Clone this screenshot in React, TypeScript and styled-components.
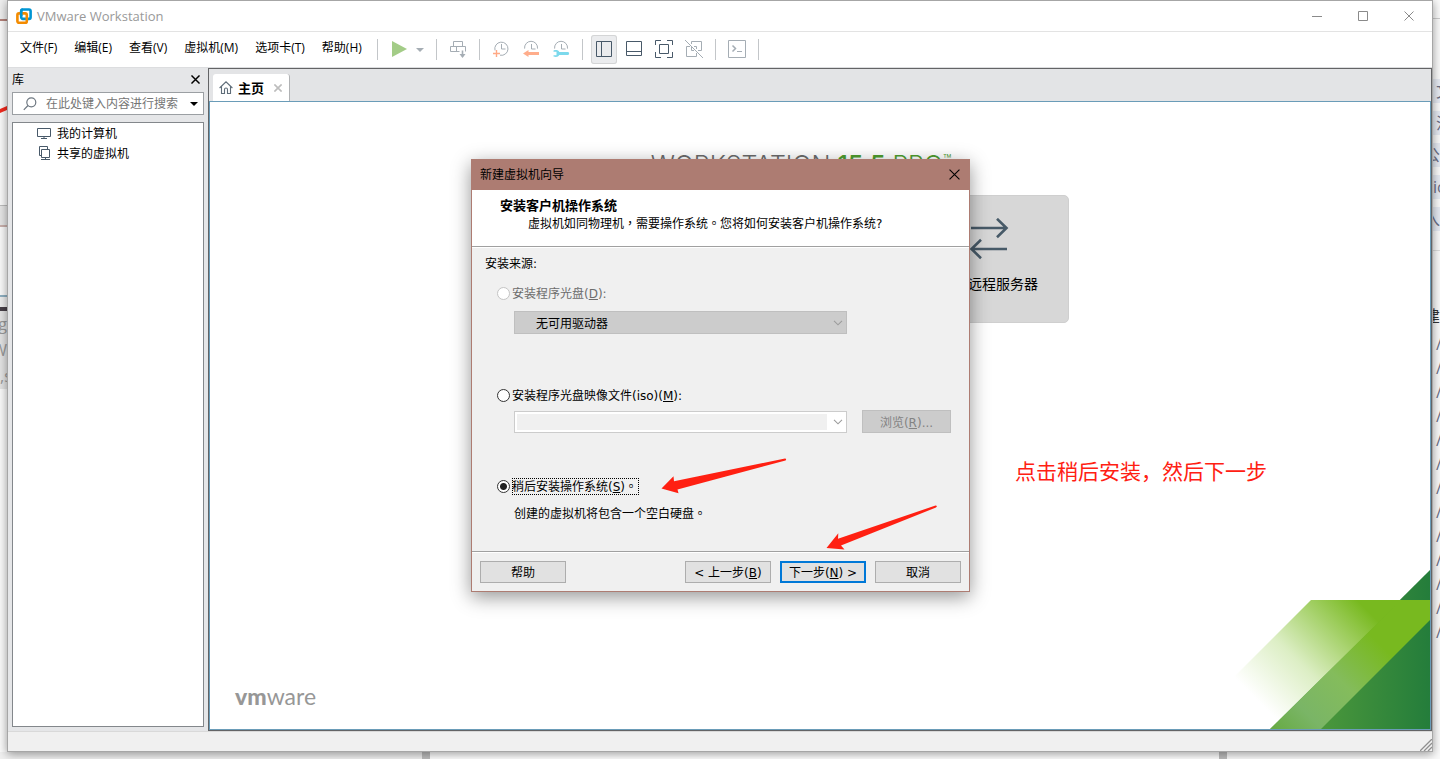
import React from "react";
import styled, { createGlobalStyle, css } from "styled-components";

const ui = `"Open Sans", "Noto Sans CJK SC", sans-serif`;
const wizardFont = `"DejaVu Sans", "Noto Sans CJK TC", sans-serif`;
const slate = "#485969";
const muted = "#a5adb4";

const GlobalStyle = createGlobalStyle`
  *, *::before, *::after { box-sizing: border-box; }
  body { margin: 0; background: #f6f6f6; font-family: ${ui}; font-size: 12px; color: #000; }
  button, input, select { font: inherit; color: inherit; margin: 0; }
  svg { display: block; flex: none; }
`;

/* ---------- desktop behind the window ---------- */

const Desktop = styled.div`
  display: grid;
  grid-template-columns: 7px minmax(0, 1fr) 7px;
  grid-template-rows: minmax(752px, 1fr) 7px;
  min-height: 100vh;
`;

const Gutter = styled.div`
  display: flex;
  flex-direction: column;
  overflow: hidden;
  background: #fafafa;
`;

const Strip = styled.div<{ $h: number; $bg?: string }>`
  flex: none;
  height: ${(p) => p.$h}px;
  background: ${(p) => p.$bg || "transparent"};
`;

const Sliver = styled.div<{ $h: number; $bg?: string; $color?: string; $end?: boolean; $indent?: number }>`
  flex: none;
  display: flex;
  align-items: center;
  justify-content: ${(p) => (p.$end ? "flex-end" : "flex-start")};
  height: ${(p) => p.$h}px;
  padding-left: ${(p) => p.$indent || 0}px;
  font-size: 16px;
  line-height: 24px;
  white-space: nowrap;
  color: ${(p) => p.$color || "#6b6f86"};
  background: ${(p) => p.$bg || "transparent"};
`;

const Tags = styled.div`
  display: flex;
  flex-direction: column;
  gap: 8px;
  padding: 60px 0 19px;
`;

const BottomEdge = styled.div`
  grid-column: 1 / -1;
  display: grid;
  grid-template-columns: 422px 8px minmax(0, 1fr) 8px 213px;
  background: #fbfbfb;
`;

const BottomPiece = styled.div<{ $bg: string }>`
  background: ${(p) => p.$bg};
`;

/* ---------- application window ---------- */

const Frame = styled.main`
  position: relative;
  z-index: 1;
  display: flex;
  flex-direction: column;
  background: #fff;
  border: 1px solid #a6a6a6;
  box-shadow: 0 2px 9px rgba(0, 0, 0, 0.4);
`;

const TitleBar = styled.header`
  display: flex;
  align-items: center;
  height: 31px;
  padding-left: 8px;
  gap: 5px;
  border-bottom: 1px solid #e3e3e3;
  color: #999;
`;

const AppTitle = styled.span`
  flex: 1;
  padding-bottom: 1px;
  font-size: 13px;
  line-height: 18px;
`;

const Controls = styled.div`
  display: flex;
`;

const ControlButton = styled.button`
  display: grid;
  place-items: center;
  width: 46px;
  height: 30px;
  padding: 0;
  border: 0;
  background: none;
`;

const MenuRow = styled.div`
  display: flex;
  align-items: center;
  height: 36px;
  border-bottom: 1px solid #dcdddf;
`;

const Menu = styled.nav`
  display: flex;
  flex: 0 0 369px;
  gap: 17px;
  padding-left: 12px;
`;

const MenuButton = styled.button`
  padding: 0 0 3px;
  border: 0;
  background: none;
  line-height: 18px;
  white-space: nowrap;
`;

const ToolGroup = styled.div`
  display: flex;
  gap: 4px;
  padding: 0 8px;
  align-items: center;
`;

const Divider = styled.span`
  width: 1px;
  height: 21px;
  background: #c3c6c9;
`;

const ToolButton = styled.button<{ $active?: boolean; $narrow?: boolean }>`
  display: grid;
  align-content: center;
  justify-content: ${(p) => (p.$narrow ? "start" : "center")};
  width: ${(p) => (p.$narrow ? 12 : 26)}px;
  height: 29px;
  padding: 0;
  border: 0;
  border-radius: 3px;
  background: none;
  ${(p) =>
    p.$active &&
    css`
      background: #ebecee;
      box-shadow: inset 0 0 0 1px #d4d5d6;
    `}
`;

const Body = styled.div`
  display: flex;
  flex: 1;
  min-height: 0;
`;

const StatusBar = styled.footer`
  display: flex;
  align-items: flex-end;
  justify-content: flex-end;
  height: 20px;
  background: #f0f0f0;
  border-top: 1px solid #d9d9d9;
`;

/* ---------- library sidebar ---------- */

const Library = styled.aside`
  display: flex;
  flex-direction: column;
  flex: none;
  width: 200px;
  padding: 0 4px 4px;
  background: #e5e6e8;
`;

const LibraryHead = styled.div`
  display: flex;
  align-items: center;
  justify-content: space-between;
  height: 24px;
  padding: 0 4px 1px 0;
`;

const LibraryTitle = styled.h2`
  margin: 0;
  font-size: 12px;
  font-weight: 400;
  line-height: 22px;
`;

const BareButton = styled.button`
  display: grid;
  place-items: center;
  padding: 0;
  border: 0;
  background: none;
`;

const SearchBox = styled.div`
  display: flex;
  align-items: center;
  height: 23px;
  padding: 0 5px 0 10px;
  gap: 9px;
  background: #fff;
  border: 1px solid #9b9fa3;
`;

const SearchInput = styled.input`
  flex: 1;
  min-width: 0;
  padding: 0;
  border: 0;
  outline: 0;
  background: none;
  line-height: 20px;
  &::placeholder { color: #757575; opacity: 1; }
`;

const Tree = styled.ul`
  flex: 1;
  margin: 7px 0 0;
  padding: 0;
  list-style: none;
  background: #fff;
  border: 1px solid #83878b;
`;

const TreeItem = styled.li`
  display: flex;
  align-items: center;
  gap: 6px;
  height: 20px;
  padding-left: 24px;
`;

/* ---------- home tab ---------- */

const Workspace = styled.section`
  display: flex;
  flex-direction: column;
  flex: 1;
  min-width: 0;
  border: 1px solid #636466;
  background: #e3e4e6;
`;

const TabBar = styled.div`
  display: flex;
  align-items: flex-end;
  height: 32px;
  padding-left: 4px;
`;

const Tab = styled.div`
  display: flex;
  align-items: center;
  width: 77px;
  height: 27px;
  padding: 0 7px 0 6px;
  gap: 5px;
  background: #fff;
  border-right: 1px solid #b0b2b4;
  border-radius: 3px 3px 0 0;
`;

const TabName = styled.button`
  flex: 1;
  padding: 0;
  border: 0;
  background: none;
  font-size: 13px;
  font-weight: 700;
  line-height: 20px;
  text-align: left;
  white-space: nowrap;
`;

const Home = styled.div`
  position: relative;
  display: flex;
  flex-direction: column;
  justify-content: space-between;
  flex: 1;
  background: #fff;
  border: 1px solid #6a9cb8;
`;

const Hero = styled.div`
  display: flex;
  flex-direction: column;
  align-self: center;
  width: 536px;
  margin-right: 38px;
  padding-top: 46px;
`;

const Product = styled.h1`
  margin: 0 0 13px;
  font-family: Inter, sans-serif;
  font-size: 25px;
  font-weight: 300;
  line-height: 34px;
  text-align: center;
  white-space: nowrap;
  color: #6c6c6c;
`;

const Edition = styled.span`
  color: #4f9e2f;
`;

const Version = styled.b`
  font-weight: 500;
`;

const Trade = styled.sup`
  font-size: 14px;
  line-height: 0;
`;

const ServerCard = styled.button`
  display: flex;
  flex-direction: column;
  align-items: center;
  align-self: flex-end;
  gap: 13px;
  width: 160px;
  height: 128px;
  padding: 22px 0 0;
  border: 1px solid #cfcfcf;
  border-radius: 5px;
  background: #d7d7d7;
  font-size: 14px;
  line-height: 22px;
`;

const HomeFoot = styled.div`
  display: flex;
  align-items: flex-end;
  justify-content: space-between;
  padding-left: 25px;
`;

const Brand = styled.span`
  padding-bottom: 17px;
  font-family: Lato, sans-serif;
  font-size: 23px;
  line-height: 32px;
  color: #979797;
`;

const BrandBold = styled.b`
  font-weight: 900;
`;

const Note = styled.p`
  position: absolute;
  top: 354px;
  right: 163px;
  margin: 0;
  font-size: 21px;
  line-height: 30px;
  color: #ff2012;
`;

/* ---------- wizard ---------- */

const Overlay = styled.div`
  position: absolute;
  inset: 0;
  z-index: 2;
  display: flex;
  justify-content: center;
  align-items: flex-start;
  padding: 158px 0 0 1px;
  pointer-events: none;
`;

const Dialog = styled.section`
  position: relative;
  width: 499px;
  border: 1px solid #ad7c72;
  background: #f0f0f0;
  font-family: ${wizardFont};
  line-height: 18px;
  box-shadow: 0 5px 18px rgba(0, 0, 0, 0.42);
  pointer-events: auto;
`;

const DialogBar = styled.header`
  display: flex;
  align-items: center;
  justify-content: space-between;
  height: 30px;
  padding: 0 9px 1px 8px;
  background: #ad7c72;
`;

const DialogIntro = styled.div`
  height: 57px;
  padding: 7px 0 0 28px;
  background: #fff;
  border-bottom: 1px solid #a0a0a0;
`;

const IntroTitle = styled.h2`
  margin: 0;
  font-size: 13px;
  line-height: 18px;
`;

const IntroText = styled.p`
  margin: 0 0 0 28px;
`;

const Form = styled.form`
  margin: 0;
`;

const Sources = styled.fieldset`
  min-width: 0;
  height: 305px;
  margin: 0;
  padding: 7px 0 0 13px;
  border: 0;
  border-top: 1px solid #fff;
`;

const SourcesLabel = styled.legend`
  float: left;
  width: 100%;
  padding: 0;
`;

const Option = styled.div<{ $h: number; $first?: boolean }>`
  clear: both;
  height: ${(p) => p.$h}px;
  margin-left: 12px;
  padding-top: ${(p) => (p.$first ? 12 : 0)}px;
`;

const RadioRow = styled.div<{ $dim?: boolean }>`
  display: flex;
  align-items: center;
  gap: 2px;
  height: 17px;
  color: ${(p) => (p.$dim ? "#6d6d6d" : "#000")};
`;

const Radio = styled.input`
  appearance: none;
  width: 13px;
  height: 13px;
  border: 1px solid #333;
  border-radius: 50%;
  background: #fff;
  &:checked { background: radial-gradient(circle, #222 0 3px, #fff 4px); }
  &:disabled { border-color: #c4c4c4; }
`;

const RadioLabel = styled.label<{ $focus?: boolean }>`
  padding-top: 2px;
  padding-right: 2px;
  line-height: 15px;
  outline: ${(p) => (p.$focus ? "1px dotted #000" : "none")};
  outline-offset: -1px;
`;

const FieldRow = styled.div<{ $gap: number }>`
  display: flex;
  align-items: flex-end;
  gap: 15px;
  margin: ${(p) => p.$gap}px 0 0 17px;
`;

const SelectWrap = styled.div`
  display: grid;
  align-items: center;
  width: 333px;
  > * { grid-area: 1 / 1; }
  > svg { justify-self: end; margin-right: 4px; pointer-events: none; }
`;

const DriveSelect = styled.select`
  appearance: none;
  width: 100%;
  height: 23px;
  padding: 2px 21px 0;
  border: 1px solid #bfbfbf;
  border-radius: 0;
  background: #ccc;
  color: #000;
  opacity: 1;
`;

const Combo = styled.div`
  display: flex;
  width: 333px;
  height: 22px;
  padding: 2px;
  background: #fff;
  border: 1px solid #ccc;
`;

const ComboInput = styled.input`
  flex: 1;
  min-width: 0;
  padding: 0 4px;
  border: 0;
  background: #f0f0f0;
`;

const ComboButton = styled(BareButton)`
  width: 17px;
  padding-left: 4px;
`;

const PushButton = styled.button<{ $default?: boolean }>`
  width: 86px;
  height: 22px;
  padding: 2px 0 0;
  border: ${(p) => (p.$default ? "2px solid #0078d7" : "1px solid #adadad")};
  background: #e1e1e1;
  line-height: 16px;
  white-space: nowrap;
`;

const BrowseButton = styled(PushButton)`
  width: 89px;
  height: 23px;
  border-color: #bfbfbf;
  background: #ccc;
  color: #838383;
`;

const Hint = styled.p`
  margin: 10px 0 0 17px;
`;

const Actions = styled.div`
  display: flex;
  gap: 9px;
  padding: 8px;
  border-top: 1px solid #fff;
  box-shadow: 0 -1px 0 #a0a0a0;
  > :first-child { margin-right: auto; }
`;

const Arrows = styled.svg`
  position: absolute;
  inset: -1px;
  width: 499px;
  height: 433px;
  pointer-events: none;
`;

/* ---------- icons ---------- */

const Tool = ({ children, color = muted }: { children: React.ReactNode; color?: string }) => (
  <svg width="20" height="21" viewBox="0 0 20 21" fill="none" stroke={color} aria-hidden="true">
    {children}
  </svg>
);

const AppLogo = () => (
  <svg width="16" height="17" viewBox="0 0 16 17" fill="none" strokeWidth="2.6" aria-hidden="true">
    <rect x="5.2" y="1.5" width="9.4" height="9.4" rx="1.6" stroke="#0095d3" />
    <rect x="1.4" y="5.4" width="9.4" height="9.4" rx="1.6" stroke="#f38b00" />
    <path d="M5.2 8V3.1a1.6 1.6 0 0 1 1.6-1.6" stroke="#0095d3" />
  </svg>
);

const Cross = ({ size, color, width = 1 }: { size: number; color: string; width?: number }) => (
  <svg width={size} height={size} viewBox="0 0 10 10" stroke={color} strokeWidth={width} aria-hidden="true">
    <path d="M.5.5l9 9M9.5.5l-9 9" />
  </svg>
);

const Chevron = () => (
  <svg width="10" height="6" viewBox="0 0 10 6" fill="none" stroke="#9c9c9c" strokeWidth="1.1" aria-hidden="true">
    <path d="M1 .8l4 4 4-4" />
  </svg>
);

const Clock = ({ full }: { full?: boolean }) => (
  <>
    <path d={full ? "M4 11.4A6.6 6.6 0 1 1 9 16.2" : "M3.6 9.6a6.5 6.5 0 1 1 12.9 0"} />
    <path d="M10.5 5v5h4" />
  </>
);

const menus = ["文件(F)", "编辑(E)", "查看(V)", "虚拟机(M)", "选项卡(T)", "帮助(H)"];
const slashes = Array.from({ length: 13 }, (_, i) => i);

export default function App() {
  return (
    <>
      <GlobalStyle />
      <Desktop>
        <Gutter aria-hidden="true">
          <Strip $h={19} $bg="#eee" />
          <Strip $h={2} $bg="#b3827a" />
          <Strip $h={84} />
          <svg width="7" height="8" viewBox="0 0 7 8">
            <path d="M0 4l7-3v4L0 8z" fill="#f22a1e" />
          </svg>
          <Strip $h={92} />
          <Strip $h={1} $bg="#bcbcbc" />
          <Strip $h={19} $bg="#e6e6e6" />
          <Strip $h={2} $bg="#c9b0ac" />
          <Strip $h={68} />
          <Strip $h={2} $bg="#8fb0c2" />
          <Strip $h={10} $bg="#eee" />
          <Strip $h={4} $bg="#484048" />
          <Sliver $h={26} $bg="#e4e4e4" $color="#999" $end>g</Sliver>
          <Sliver $h={26} $bg="#e4e4e4" $color="#999" $end>W</Sliver>
          <Sliver $h={26} $bg="#e4e4e4" $color="#999">,s</Sliver>
        </Gutter>

        <Frame>
          <TitleBar>
            <AppLogo />
            <AppTitle>VMware Workstation</AppTitle>
            <Controls>
              <ControlButton aria-label="最小化">
                <svg width="10" height="10" viewBox="0 0 10 10" stroke="#8a8a8a"><path d="M0 5.5h10" /></svg>
              </ControlButton>
              <ControlButton aria-label="最大化">
                <svg width="10" height="10" viewBox="0 0 10 10" fill="none" stroke="#8a8a8a"><path d="M.5.5h9v9h-9z" /></svg>
              </ControlButton>
              <ControlButton aria-label="关闭">
                <Cross size={10} color="#8a8a8a" />
              </ControlButton>
            </Controls>
          </TitleBar>

          <MenuRow>
            <Menu>
              {menus.map((m) => (
                <MenuButton key={m}>{m}</MenuButton>
              ))}
            </Menu>
            <Divider />
            <ToolGroup>
              <ToolButton aria-label="开机">
                <Tool><path d="M3 2v16l15-8z" fill="#a3cc87" stroke="none" /></Tool>
              </ToolButton>
              <ToolButton $narrow aria-label="电源选项">
                <svg width="8" height="4" viewBox="0 0 8 4"><path d="M0 0h8L4 4z" fill={muted} /></svg>
              </ToolButton>
            </ToolGroup>
            <Divider />
            <ToolGroup>
              <ToolButton aria-label="发送 Ctrl+Alt+Del">
                <Tool>
                  <path d="M5.5 7.5v-5h9v5M11.5 12.5h-9v-5h15v5M8.5 7.5v5" />
                  <path d="M14.5 11.5v6" strokeWidth="1.6" />
                  <path d="M11.5 15h6l-3 4z" fill={muted} stroke="none" />
                </Tool>
              </ToolButton>
            </ToolGroup>
            <Divider />
            <ToolGroup>
              <ToolButton aria-label="拍摄快照">
                <Tool>
                  <Clock full />
                  <path d="M5.5 11v7M2 14.5h7" stroke="#ffa985" strokeWidth="1.4" />
                </Tool>
              </ToolButton>
              <ToolButton aria-label="恢复快照">
                <Tool>
                  <Clock />
                  <path d="M2 14.5L7.5 11v2H18v3H7.5v2z" fill="#ffad8b" stroke="none" />
                </Tool>
              </ToolButton>
              <ToolButton aria-label="管理快照">
                <Tool>
                  <Clock />
                  <path
                    d="M2.5 11.6C5 10.6 7.4 11.2 8.3 13H17c1.5 0 1.5 3 0 3H8.3C7.4 17.8 5 18.4 2.5 17.4V16.2H5.5V12.8H2.5z"
                    fill="#7cd9ec"
                    stroke="none"
                  />
                </Tool>
              </ToolButton>
            </ToolGroup>
            <Divider />
            <ToolGroup>
              <ToolButton $active aria-label="显示库">
                <Tool color={slate}><path d="M2.5 2.5h15v15h-15zM7.5 2.5v15" /></Tool>
              </ToolButton>
              <ToolButton aria-label="显示缩略图栏">
                <Tool color={slate}><path d="M2.5 2.5h15v14h-15zM2.5 12.5h15" /></Tool>
              </ToolButton>
              <ToolButton aria-label="全屏">
                <Tool color={slate}>
                  <path d="M1.5 6V1.5H7M13 1.5h5.5V6M18.5 13v5.5H13M7 18.5H1.5V13M5.5 5.5h9v9h-9z" />
                </Tool>
              </ToolButton>
              <ToolButton aria-label="Unity">
                <Tool>
                  <path d="M7.5 5V2.5h10v9H14M12.5 14v3.5h-10v-10H6M7.5 8v3.5H10M12.5 10V7.5H10" />
                  <path d="M1 1l18 18" />
                </Tool>
              </ToolButton>
            </ToolGroup>
            <Divider />
            <ToolGroup>
              <ToolButton aria-label="控制台">
                <Tool>
                  <path d="M1.5 1.5h17v17h-17zM10 12.5h5" />
                  <path d="M5.5 6.5l3 3-3 3" strokeWidth="1.5" />
                </Tool>
              </ToolButton>
            </ToolGroup>
            <Divider />
          </MenuRow>

          <Body>
            <Library>
              <LibraryHead>
                <LibraryTitle>库</LibraryTitle>
                <BareButton aria-label="关闭库">
                  <Cross size={9} color="#000" width={1.6} />
                </BareButton>
              </LibraryHead>
              <SearchBox>
                <svg width="14" height="14" viewBox="0 0 14 14" fill="none" stroke="#6d7780" strokeWidth="1.2">
                  <circle cx="8.3" cy="5.3" r="4.5" />
                  <path d="M5 8.5L.8 12.8" />
                </svg>
                <SearchInput aria-label="搜索" placeholder="在此处键入内容进行搜索" />
                <BareButton aria-label="搜索选项">
                  <svg width="8" height="4" viewBox="0 0 8 4"><path d="M0 0h8L4 4z" /></svg>
                </BareButton>
              </SearchBox>
              <Tree>
                <TreeItem>
                  <svg width="14" height="12" viewBox="0 0 14 12" fill="none" stroke={slate}>
                    <path d="M.5 1.5h13v8H.5zM7 9.5v2M4 11.5h6" />
                  </svg>
                  我的计算机
                </TreeItem>
                <TreeItem>
                  <svg width="14" height="14" viewBox="0 0 14 14" fill="none" stroke={slate}>
                    <path d="M4.5 3.5h8v8h-8zM4.5 9.5h-2v-9h8v3M8.5 11.5v2M4 13.5h9" />
                  </svg>
                  共享的虚拟机
                </TreeItem>
              </Tree>
            </Library>

            <Workspace>
              <TabBar>
                <Tab>
                  <svg width="14" height="13" viewBox="0 0 14 13" fill="none" stroke="#5f6d79" strokeWidth="1.1">
                    <path d="M.6 7L7 .8 13.4 7M2.5 5.5v7h3V8.5C5.5 6.5 8.5 6.5 8.5 8.5v4h3v-7" />
                  </svg>
                  <TabName>主页</TabName>
                  <BareButton aria-label="关闭主页">
                    <Cross size={8} color="#bdbdbd" width={2} />
                  </BareButton>
                </Tab>
              </TabBar>
              <Home>
                <Hero>
                  <Product>
                    WORKSTATION <Edition><Version>15.5</Version> PRO<Trade>™</Trade></Edition>
                  </Product>
                  <ServerCard>
                    <svg width="40" height="42" viewBox="0 0 40 42" fill="none" stroke="#475a68" strokeWidth="2.6">
                      <path d="M2 10h36M28 .8l9.500 9.200-9.500 9.200M38 31H2M12 21.800L2.500 31l9.500 9.200" />
                    </svg>
                    连接远程服务器
                  </ServerCard>
                </Hero>
                <Note>点击稍后安装，然后下一步</Note>
                <HomeFoot>
                  <Brand><BrandBold>vm</BrandBold>ware</Brand>
                  <svg width="200" height="160" viewBox="0 0 200 160" aria-hidden="true">
                    <defs>
                      <linearGradient id="deep" gradientUnits="userSpaceOnUse" x1="40" y1="0" x2="200" y2="0">
                        <stop offset="0" stopColor="#5fa03a" />
                        <stop offset="0.4" stopColor="#46943b" />
                        <stop offset="1" stopColor="#247d3b" />
                      </linearGradient>
                      <linearGradient id="lime" gradientUnits="userSpaceOnUse" x1="38" y1="142" x2="138" y2="42">
                        <stop offset="0" stopColor="#fff" />
                        <stop offset="0.4" stopColor="#dceec4" />
                        <stop offset="1" stopColor="#78b91f" />
                      </linearGradient>
                      <linearGradient id="band" gradientUnits="userSpaceOnUse" x1="55" y1="170" x2="150" y2="75">
                        <stop offset="0" stopColor="#68ab46" />
                        <stop offset="0.25" stopColor="#7ab566" />
                        <stop offset="0.6" stopColor="#84bc5c" />
                        <stop offset="1" stopColor="#78b91f" />
                      </linearGradient>
                    </defs>
                    <path d="M200 1v159H40z" fill="url(#deep)" />
                    <path d="M81 31h91L40 160H-48z" fill="url(#lime)" />
                    <path d="M171 31h29v20L91 160H40z" fill="url(#band)" />
                  </svg>
                </HomeFoot>
              </Home>
            </Workspace>
          </Body>

          <StatusBar>
            <svg width="12" height="12" viewBox="0 0 12 12" stroke="#8f8f8f" strokeWidth="1.3">
              <path d="M0 12L12 0M4 12l8-8M8 12l4-4" />
            </svg>
          </StatusBar>

          <Overlay>
            <Dialog role="dialog" aria-label="新建虚拟机向导">
              <DialogBar>
                新建虚拟机向导
                <BareButton aria-label="关闭向导">
                  <Cross size={11} color="#000" />
                </BareButton>
              </DialogBar>
              <DialogIntro>
                <IntroTitle>安装客户机操作系统</IntroTitle>
                <IntroText>虚拟机如同物理机，需要操作系统。您将如何安装客户机操作系统?</IntroText>
              </DialogIntro>
              <Form onSubmit={(e) => e.preventDefault()}>
                <Sources>
                  <SourcesLabel>安装来源:</SourcesLabel>
                  <Option $h={114} $first>
                    <RadioRow $dim>
                      <Radio type="radio" name="source" id="disc" disabled />
                      <RadioLabel htmlFor="disc">安装程序光盘(<u>D</u>):</RadioLabel>
                    </RadioRow>
                    <FieldRow $gap={9}>
                      <SelectWrap>
                        <DriveSelect aria-label="驱动器" disabled>
                          <option>无可用驱动器</option>
                        </DriveSelect>
                        <Chevron />
                      </SelectWrap>
                    </FieldRow>
                  </Option>
                  <Option $h={91}>
                    <RadioRow>
                      <Radio type="radio" name="source" id="iso" />
                      <RadioLabel htmlFor="iso">安装程序光盘映像文件(iso)(<u>M</u>):</RadioLabel>
                    </RadioRow>
                    <FieldRow $gap={6}>
                      <Combo>
                        <ComboInput aria-label="映像文件" disabled />
                        <ComboButton type="button" aria-label="展开" disabled><Chevron /></ComboButton>
                      </Combo>
                      <BrowseButton type="button" disabled>浏览(<u>R</u>)...</BrowseButton>
                    </FieldRow>
                  </Option>
                  <Option $h={60}>
                    <RadioRow>
                      <Radio type="radio" name="source" id="later" defaultChecked />
                      <RadioLabel htmlFor="later" $focus>稍后安装操作系统(<u>S</u>)。</RadioLabel>
                    </RadioRow>
                    <Hint>创建的虚拟机将包含一个空白硬盘。</Hint>
                  </Option>
                </Sources>
                <Actions>
                  <PushButton type="button">帮助</PushButton>
                  <PushButton type="button">&lt; 上一步(<u>B</u>)</PushButton>
                  <PushButton type="submit" $default>下一步(<u>N</u>) &gt;</PushButton>
                  <PushButton type="button">取消</PushButton>
                </Actions>
              </Form>
              <Arrows viewBox="0 0 499 433" fill="#ff2012" aria-hidden="true">
                <path d="M190.500 329.500L202.500 317.300L203 322.300L314 299.500Q316 300 314.500 301.500L206.500 330.500L207.500 334.300z" />
                <path d="M355.500 389L367.300 374.300L367 379.700L464.500 346.500Q467 347 465 348.500L370 386.500L373.500 390.500z" />
              </Arrows>
            </Dialog>
          </Overlay>
        </Frame>

        <Gutter aria-hidden="true">
          <Strip $h={18} />
          <Strip $h={1} $bg="#ccc" />
          <Tags>
            <Sliver $h={24} $bg="#e6eaf2" $indent={3}>文</Sliver>
            <Sliver $h={24} $bg="#e6eaf2" $indent={3}>注</Sliver>
            <Sliver $h={24} $bg="#e6eaf2" $end>公</Sliver>
            <Sliver $h={24} $bg="#e6eaf2">ic</Sliver>
            <Sliver $h={24} $bg="#e6eaf2" $end>入</Sliver>
          </Tags>
          <Strip $h={1} $bg="#ddd" />
          <Strip $h={53} />
          <Sliver $h={24} $color="#333" $end>建</Sliver>
          <Strip $h={4} />
          {slashes.map((n) => (
            <Sliver key={n} $h={24} $indent={3}>/</Sliver>
          ))}
        </Gutter>

        <BottomEdge aria-hidden="true">
          <BottomPiece $bg="#f0f0f0" />
          <BottomPiece $bg="#bdbdbd" />
          <BottomPiece $bg="#fff" />
          <BottomPiece $bg="#bdbdbd" />
          <BottomPiece $bg="#fafafa" />
        </BottomEdge>
      </Desktop>
    </>
  );
}
